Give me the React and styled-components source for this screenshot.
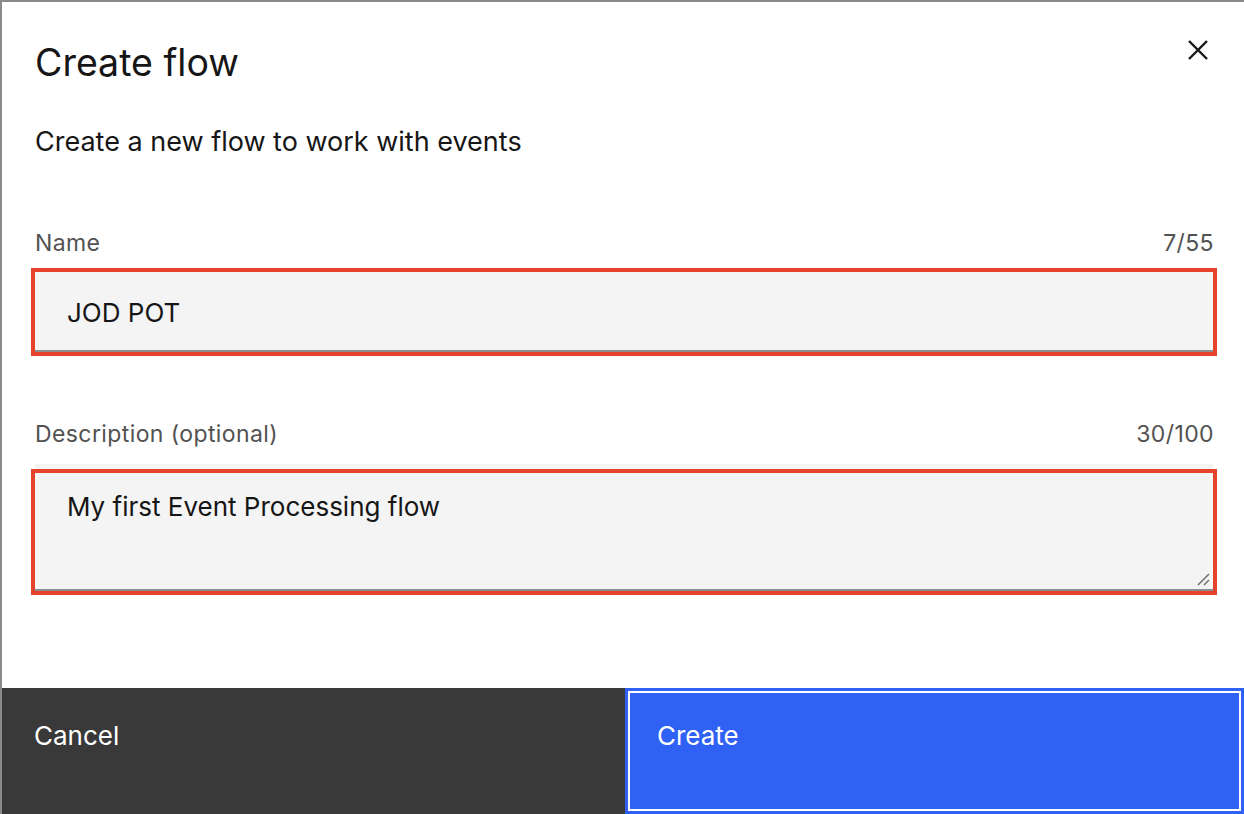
import React from "react";
import styled, { createGlobalStyle } from "styled-components";

const Global = createGlobalStyle`
html, body {
  margin: 0;
  padding: 0;
  background: #8d8d8d;
}
body {
  font-family: "Inter", "Noto Sans", sans-serif;
  color: #161616;
}
* { box-sizing: border-box; }
`;

const Modal = styled.div`
width: 1244px;
height: 814px;
border-top: 2px solid #8a8a8a;
border-left: 2px solid #8a8a8a;
background: #ffffff;
display: flex;
flex-direction: column;
`;

const Header = styled.div`
display: flex;
justify-content: space-between;
align-items: flex-start;
padding: 39px 30px 0 33px;
`;

const Title = styled.h2`
margin: 0;
font-weight: 400;
font-size: 37.5px;
line-height: 44px;
`;

const Close = styled.button`
border: 0;
background: none;
padding: 0;
margin-top: -7px;
width: 32px;
height: 32px;
display: flex;
align-items: center;
justify-content: center;
cursor: pointer;
`;

const Body = styled.div`
flex: 1;
padding: 0 28px 0 33px;
display: flex;
flex-direction: column;
`;

const Lead = styled.p`
margin: 41px 0 0;
font-size: 27px;
line-height: 32px;
`;

const Field = styled.div`
display: flex;
flex-direction: column;
margin-top: ${(p) => p.$gap}px;
`;

const LabelRow = styled.div`
display: flex;
justify-content: space-between;
font-size: 23px;
line-height: 32px;
color: #525252;
letter-spacing: 0.4px;
margin-bottom: ${(p) => p.$gap}px;
padding-right: 2px;
`;

const Input = styled.div`
position: relative;
height: ${(p) => p.$h}px;
background: #f4f4f4;
border-bottom: 2px solid #8d8d8d;
outline: 4px solid #e5432b;
box-shadow: ${(p) => (p.$multi ? "0 -9px 0 0 #f4f4f4" : "none")};
padding: ${(p) => (p.$multi ? "18px 32px 0" : "4px 32px 0")};
display: flex;
align-items: ${(p) => (p.$multi ? "flex-start" : "center")};
font-size: 26px;
line-height: 32px;
color: #161616;
margin-right: 3px;
`;

const Grip = styled.svg`
position: absolute;
right: 2px;
bottom: 2px;
`;

const Footer = styled.div`
display: flex;
height: 126px;
`;

const Button = styled.button`
flex: ${(p) => (p.$primary ? "0 0 619px" : "1")};
border: 0;
margin: 0;
text-align: left;
display: flex;
align-items: flex-start;
padding: 32px 32px 0;
font-family: inherit;
font-size: 26px;
line-height: 32px;
color: #ffffff;
background: ${(p) => (p.$primary ? "#2f62f4" : "#393939")};
box-shadow: ${(p) =>
  p.$primary ? "inset 0 0 0 3px #2f62f4, inset 0 0 0 5px #ffffff" : "none"};
`;

export default function App() {
  return (
    <>
      <Global />
      <Modal>
        <Header>
          <Title>Create flow</Title>
          <Close aria-label="Close">
            <svg width="24" height="24" viewBox="0 0 24 24">
              <path d="M3 3 L21 21 M21 3 L3 21" stroke="#161616" strokeWidth="2.4" />
            </svg>
          </Close>
        </Header>
        <Body>
          <Lead>Create a new flow to work with events</Lead>
          <Field $gap={69}>
            <LabelRow $gap={13}>
              <span>Name</span>
              <span>7/55</span>
            </LabelRow>
            <Input $h={80}>JOD POT</Input>
          </Field>
          <Field $gap={66}>
            <LabelRow $gap={23}>
              <span>Description (optional)</span>
              <span>30/100</span>
            </LabelRow>
            <Input $h={118} $multi>
              My first Event Processing flow
              <Grip width="16" height="16" viewBox="0 0 16 16">
                <path d="M3 14 L14 3 M9 14 L14 9" stroke="#6f6f6f" strokeWidth="1.5" />
              </Grip>
            </Input>
          </Field>
        </Body>
        <Footer>
          <Button>Cancel</Button>
          <Button $primary>Create</Button>
        </Footer>
      </Modal>
    </>
  );
}
